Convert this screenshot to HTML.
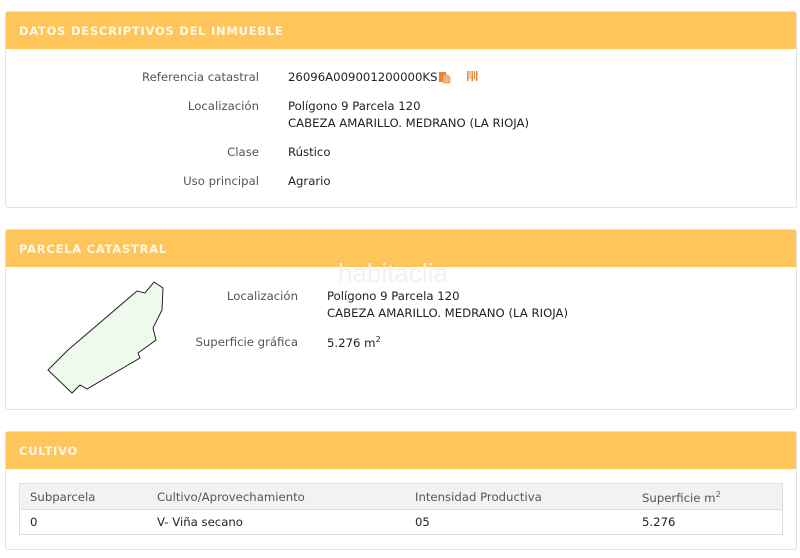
<!DOCTYPE html>
<html><head><meta charset="utf-8"><style>
*{margin:0;padding:0;box-sizing:border-box}
body{width:800px;height:558px;background:#fff;font-family:"DejaVu Sans","Liberation Sans",sans-serif;font-size:11.7px;color:#222;position:relative;overflow:hidden}
.p{position:absolute;left:5px;width:792px;border:1px solid #e3e3e3;border-radius:3px;background:#fff;overflow:hidden}
.h{height:37px;background:#fdc55a;color:#fff8e8;font-weight:bold;font-size:11.5px;padding:12px 0 0 13px;font-family:"DejaVu Sans",sans-serif;letter-spacing:0.75px}
.t{position:absolute;white-space:nowrap}
.l{color:#555;text-align:right}
</style></head><body>
<div class="p" style="top:11px;height:197px"><div class="h">DATOS DESCRIPTIVOS DEL INMUEBLE</div></div>
<div class="t l" style="right:541px;top:70px">Referencia catastral</div>
<div class="t" style="left:288px;top:70px">26096A009001200000KS</div>
<svg class="t" style="left:438px;top:70px" width="14" height="14"><rect x="1" y="2" width="7" height="10" fill="#e8833a"/><path d="M5 5h5l2 2v6H5z" fill="#f4b27a" stroke="#e8833a" stroke-width="0.5"/></svg>
<svg class="t" style="left:466px;top:70px" width="12" height="12"><g fill="#e8833a"><rect x="1" y="1" width="1.5" height="10"/><rect x="3.5" y="1" width="1" height="8"/><rect x="5.5" y="1" width="1.5" height="10"/><rect x="8" y="1" width="1" height="8"/><rect x="10" y="1" width="1.5" height="10"/></g></svg>
<div class="t l" style="right:541px;top:99px">Localización</div>
<div class="t" style="left:288px;top:99px">Polígono 9 Parcela 120</div>
<div class="t" style="left:288px;top:116px">CABEZA AMARILLO. MEDRANO (LA RIOJA)</div>
<div class="t l" style="right:541px;top:145px">Clase</div>
<div class="t" style="left:288px;top:145px">Rústico</div>
<div class="t l" style="right:541px;top:174px">Uso principal</div>
<div class="t" style="left:288px;top:174px">Agrario</div>

<div class="p" style="top:229px;height:181px"><div class="h">PARCELA CATASTRAL</div></div>
<div class="t" style="left:338px;top:258px;font-size:26px;color:#f2f2f2;font-family:'Liberation Sans',sans-serif">habitaclia</div>
<svg class="t" style="left:0;top:0" width="800" height="558"><polygon points="48,370 72,393 80,385 87,389 140,358 138,353 156,340 153,328 162,310 163,288 154,282 145,293 137,291 68,350" fill="#eefaec" stroke="#222" stroke-width="1"/></svg>
<div class="t l" style="right:502px;top:289px">Localización</div>
<div class="t" style="left:327px;top:289px">Polígono 9 Parcela 120</div>
<div class="t" style="left:327px;top:306px">CABEZA AMARILLO. MEDRANO (LA RIOJA)</div>
<div class="t l" style="right:502px;top:335px">Superficie gráfica</div>
<div class="t" style="left:327px;top:335px">5.276 m<sup style="font-size:8px">2</sup></div>

<div class="p" style="top:431px;height:119px"><div class="h">CULTIVO</div></div>
<div style="position:absolute;left:19px;top:483px;width:764px;height:52px;border:1px solid #ddd">
<div style="height:26px;background:#f2f2f2;border-bottom:1px solid #ddd"></div></div>
<div class="t" style="left:30px;top:490px;color:#555">Subparcela</div>
<div class="t" style="left:157px;top:490px;color:#555">Cultivo/Aprovechamiento</div>
<div class="t" style="left:415px;top:490px;color:#555">Intensidad Productiva</div>
<div class="t" style="left:642px;top:490px;color:#555">Superficie m<sup style="font-size:8px">2</sup></div>
<div class="t" style="left:30px;top:515px">0</div>
<div class="t" style="left:157px;top:515px">V- Viña secano</div>
<div class="t" style="left:415px;top:515px">05</div>
<div class="t" style="left:642px;top:515px">5.276</div>
</body></html>
